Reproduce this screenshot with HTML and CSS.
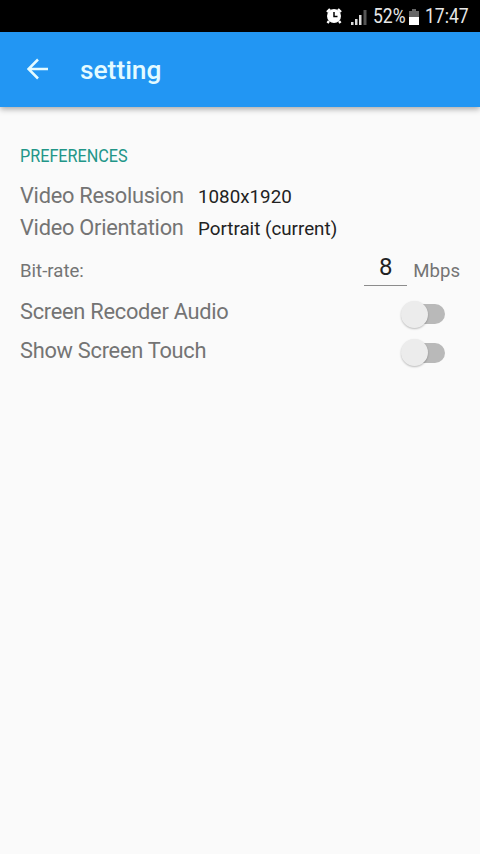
FILE: index.html
```html
<!DOCTYPE html>
<html lang="en">
<head>
<meta charset="utf-8">
<title>setting</title>
<link rel="stylesheet" href="styles.css">
</head>
<body>
<div class="status">
  <svg class="alarm" width="16" height="18" viewBox="0 0 16 18">
    <circle cx="8" cy="9" r="7" fill="#fff"/>
    <path d="M1 5 4 2M15 5 12 2M3 14 1.500 16M13 14l1.500 2" stroke="#fff" stroke-width="2.4"/>
    <path d="M8 5v4.500h3.500" fill="none" stroke="#000" stroke-width="1.500"/>
  </svg>
  <svg class="signal" width="16" height="16" viewBox="0 0 16 16">
    <path d="M0 13h2.500v3H0zM4 10h2.500v6H4zM8 6h2.500v10H8z" fill="#ddd"/>
    <path d="M12.500 1h3v15h-3z" fill="#555"/>
  </svg>
  <span class="percent"><span class="narrow">52%</span></span>
  <svg class="battery" width="10" height="16" viewBox="0 0 10 16">
    <path d="M3 0h4v2h3v6H0V2h3z" fill="#666"/>
    <path d="M0 8h10v8H0z" fill="#fff"/>
  </svg>
  <span class="clock"><span class="narrow">17:47</span></span>
</div>
<header class="appbar">
  <svg class="back" width="22" height="22" viewBox="0 0 22 22">
    <path d="M21 11H2M11 1.500 1.500 11l9.500 9.500" fill="none" stroke="#e4fbff" stroke-width="2.500"/>
  </svg>
  <h1 class="title">setting</h1>
</header>
<main class="content">
  <h2 class="section"><span class="narrow">PREFERENCES</span></h2>
  <div class="row choice"><span class="label">Video Resolusion</span><span class="value">1080x1920</span></div>
  <div class="row choice"><span class="label">Video Orientation</span><span class="value">Portrait (current)</span></div>
  <div class="row bitrate"><span class="small">Bit-rate:</span><span class="field">8</span><span class="small">Mbps</span></div>
  <div class="row audio"><span class="label">Screen Recoder Audio</span><span class="switch"><span class="thumb"></span></span></div>
  <div class="row touch"><span class="label">Show Screen Touch</span><span class="switch"><span class="thumb"></span></span></div>
</main>
</body>
</html>
```
FILE: styles.css
```css
* { box-sizing: border-box; }
body {
  margin: 0;
  height: 854px;
  overflow: hidden;
  background: #fafafa;
  font-family: Roboto, sans-serif;
  color: #747474;
}
svg { display: block; flex: none; }
.narrow { display: inline-block; transform-origin: 0 50%; }
.status {
  display: flex;
  align-items: center;
  height: 32px;
  padding-left: 326px;
  background: #000;
  color: #e8e8e8;
  font-size: 19.5px;
  line-height: 34px;
}
.status .narrow { transform: translateY(1px) scaleX(.9); }
.alarm { margin-right: 9px; }
.signal { margin: 2px 6px 0 0; }
.percent { width: 36px; white-space: nowrap; }
.battery { margin: 1px 6px 0 0; }
.clock { white-space: nowrap; }
.appbar {
  display: flex;
  align-items: center;
  height: 75px;
  padding-left: 27px;
  background: #2296f3;
  box-shadow: 0 2px 6px rgba(0, 0, 0, .35);
}
.back { margin-top: -1px; }
.title {
  margin: 0 0 0 31px;
  color: #e4fbff;
  font-size: 26.3px;
  font-weight: 500;
  line-height: 36px;
}
.content { padding: 36px 20px 0; }
.section {
  margin: 0 0 13px;
  height: 24px;
  color: #229688;
  font-size: 18px;
  font-weight: 400;
  line-height: 26px;
}
.section .narrow { transform: scaleX(.9); }
.row { display: flex; align-items: center; white-space: nowrap; }
.choice { height: 32px; }
.label { font-size: 21.8px; line-height: 30px; letter-spacing: -.26px; }
.choice .label { width: 178px; }
.value { margin-top: 2px; color: #222; font-size: 18.8px; }
.bitrate { height: 50px; }
.small { margin-top: 3px; font-size: 18.6px; }
.field {
  width: 43px;
  height: 36px;
  margin: -2px 6px 0 auto;
  border-bottom: 1.500px solid #8c8c8c;
  color: #222;
  font-size: 24px;
  line-height: 35px;
  text-align: center;
}
.audio { height: 36px; }
.touch { height: 41px; }
.switch {
  display: flex;
  align-items: center;
  width: 40px;
  height: 20px;
  margin: 4px 15px 0 auto;
  border-radius: 10px;
  background: #b9b9b9;
}
.thumb {
  width: 27px;
  height: 27px;
  flex: none;
  margin-left: -4px;
  border-radius: 50%;
  background: #ececec;
  box-shadow: 0 1px 2px rgba(0, 0, 0, .25);
}
```
